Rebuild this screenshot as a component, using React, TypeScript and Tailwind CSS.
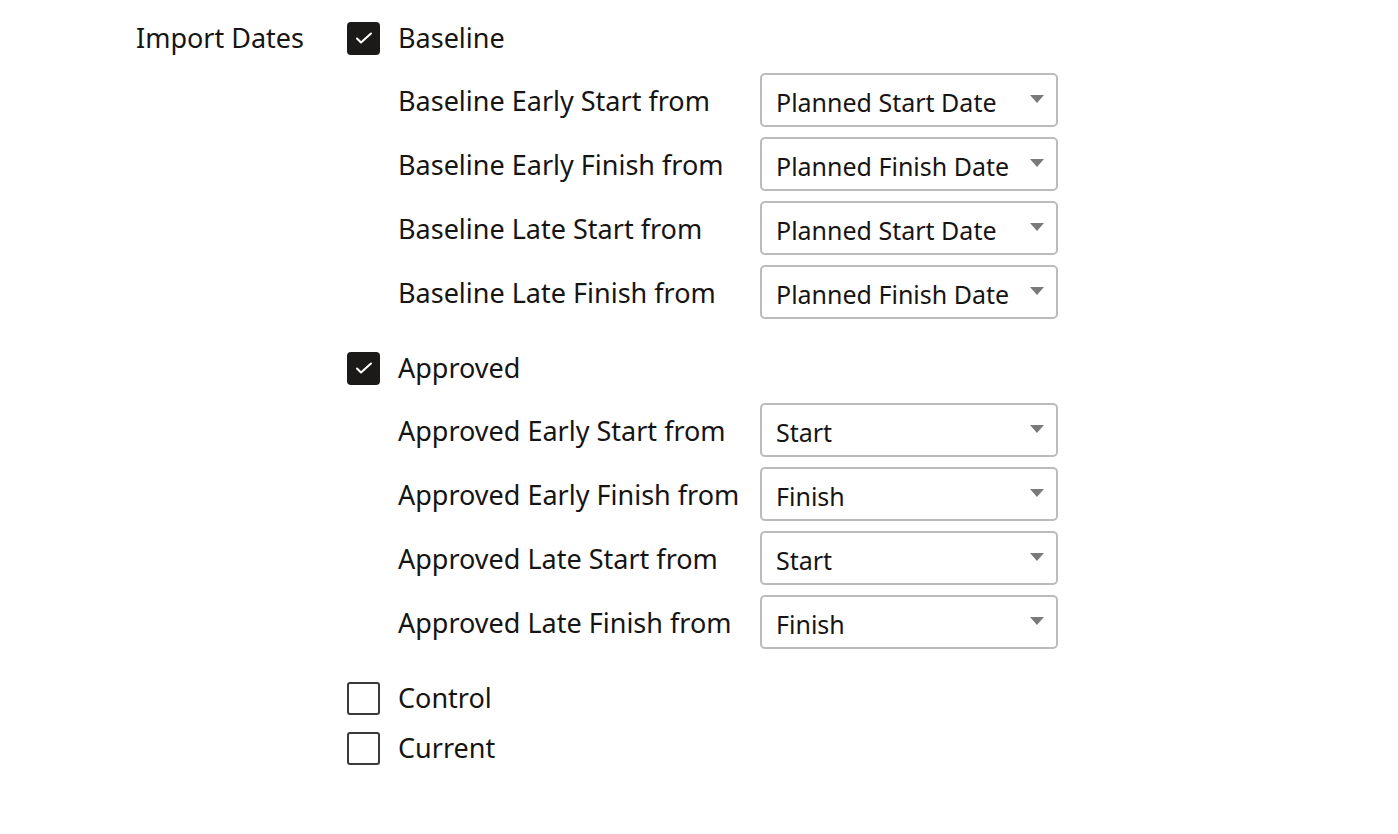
import React from 'react';

type Row = { label: string; value: string };

const baseline: Row[] = [
  { label: 'Baseline Early Start from', value: 'Planned Start Date' },
  { label: 'Baseline Early Finish from', value: 'Planned Finish Date' },
  { label: 'Baseline Late Start from', value: 'Planned Start Date' },
  { label: 'Baseline Late Finish from', value: 'Planned Finish Date' },
];

const approved: Row[] = [
  { label: 'Approved Early Start from', value: 'Start' },
  { label: 'Approved Early Finish from', value: 'Finish' },
  { label: 'Approved Late Start from', value: 'Start' },
  { label: 'Approved Late Finish from', value: 'Finish' },
];

function Checkbox({ checked, label }: { checked: boolean; label: string }) {
  return (
    <label className="flex items-center gap-[18px] h-[32px]">
      {checked ? (
        <span className="w-[33px] h-[33px] rounded-[4px] bg-[#1c1a18] flex items-center justify-center">
          <svg width="18" height="14" viewBox="0 0 18 14" fill="none">
            <path d="M2 7.5l4 4 10-9" stroke="#fff" strokeWidth="2" strokeLinecap="round" strokeLinejoin="round" />
          </svg>
        </span>
      ) : (
        <span className="w-[33px] h-[33px] rounded-[3px] border-2 border-[#3a3a3a] bg-white" />
      )}
      <span>{label}</span>
    </label>
  );
}

function Select({ value }: { value: string }) {
  return (
    <div className="w-[298px] h-[54px] rounded-[5px] border-2 border-[#bcbcbc] flex items-center pl-[14px] pr-[12px] pt-[6px] text-[25px] text-[#161513]">
      <span className="flex-1">{value}</span>
      <svg width="14" height="9" viewBox="0 0 14 9" className="-mt-[8px]">
        <path d="M0 0h14L7 8z" fill="#7a7a7a" />
      </svg>
    </div>
  );
}

function Group({ rows }: { rows: Row[] }) {
  return (
    <div className="flex flex-col gap-[10px] pl-[51px]">
      {rows.map((r) => (
        <div key={r.label} className="flex items-center">
          <span className="w-[362px] mt-[2px]">{r.label}</span>
          <Select value={r.value} />
        </div>
      ))}
    </div>
  );
}

export default function App() {
  return (
    <div
      className="min-h-screen bg-white text-[#161513] text-[27px] pt-[22px] pl-[136px]"
      style={{ fontFamily: '"Noto Sans", "Open Sans", sans-serif' }}
    >
      <div className="flex">
        <div className="w-[211px] h-[32px] flex items-center">Import Dates</div>
        <div className="flex flex-col">
          <Checkbox checked label="Baseline" />
          <div className="mt-[19px]">
            <Group rows={baseline} />
          </div>
          <div className="mt-[33px]">
            <Checkbox checked label="Approved" />
          </div>
          <div className="mt-[19px]">
            <Group rows={approved} />
          </div>
          <div className="mt-[33px] flex flex-col gap-[18px]">
            <Checkbox checked={false} label="Control" />
            <Checkbox checked={false} label="Current" />
          </div>
        </div>
      </div>
    </div>
  );
}
